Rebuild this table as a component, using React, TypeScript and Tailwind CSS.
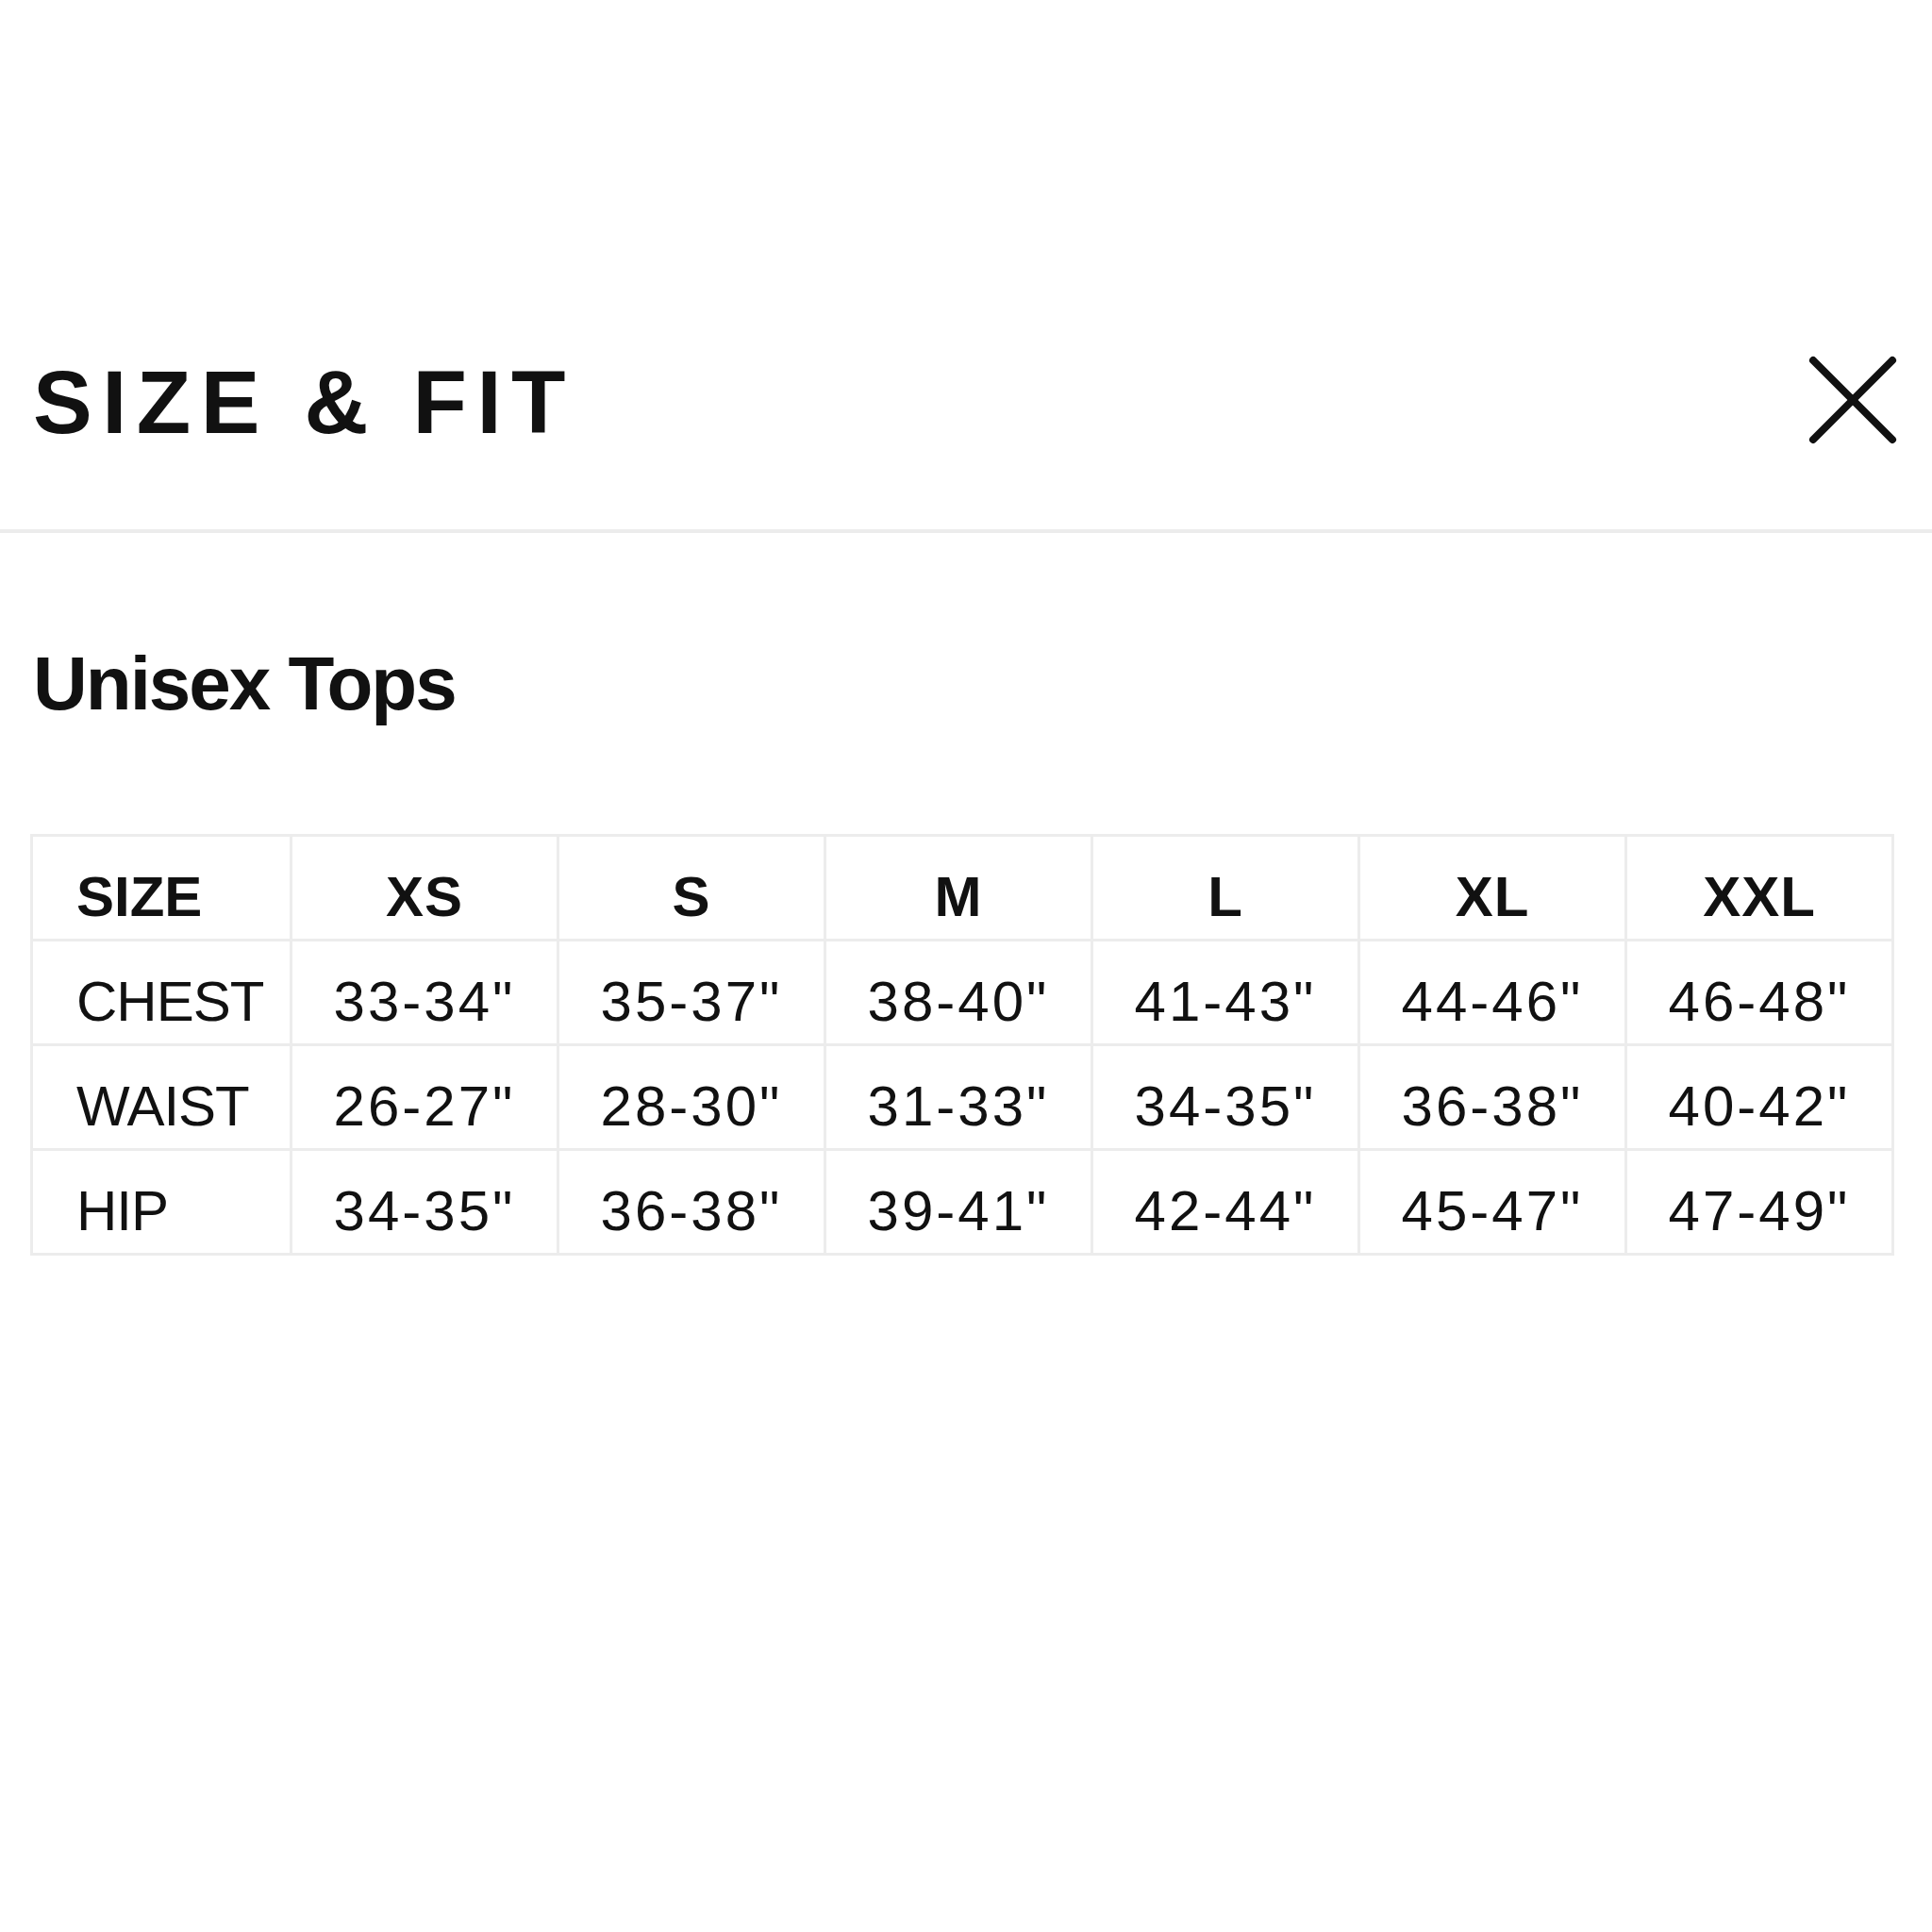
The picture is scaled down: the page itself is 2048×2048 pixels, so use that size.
import React from "react";

// Size & Fit modal — unisex tops size chart

const sizes = ["XS", "S", "M", "L", "XL", "XXL"];

const rows: { label: string; values: string[] }[] = [
  { label: "CHEST", values: ['33-34"', '35-37"', '38-40"', '41-43"', '44-46"', '46-48"'] },
  { label: "WAIST", values: ['26-27"', '28-30"', '31-33"', '34-35"', '36-38"', '40-42"'] },
  { label: "HIP", values: ['34-35"', '36-38"', '39-41"', '42-44"', '45-47"', '47-49"'] },
];

function CloseIcon() {
  return (
    <svg width="94" height="94" viewBox="0 0 94 94" className="-mt-[3px] -mr-[3px] shrink-0" aria-label="Close">
      <line x1="5" y1="5" x2="89" y2="89" stroke="#111" strokeWidth="8" strokeLinecap="round" />
      <line x1="89" y1="5" x2="5" y2="89" stroke="#111" strokeWidth="8" strokeLinecap="round" />
    </svg>
  );
}

function Cell({ children, head = false, first = false }: { children: React.ReactNode; head?: boolean; first?: boolean }) {
  return (
    <div
      className={
        "h-[111px] border-r-[3px] border-b-[3px] border-[#ececec] flex items-center pt-[20px] text-[60px] leading-none " +
        (head ? "font-bold " : "font-normal ") +
        (first
          ? "justify-start pl-[46px] " + (head ? "tracking-[0px]" : "tracking-[-1px]")
          : "justify-center " + (head ? "tracking-[1px]" : "tracking-[3px]"))
      }
    >
      {children}
    </div>
  );
}

export default function App() {
  return (
    <div className="w-[2048px] h-[2048px] bg-white text-[#111] font-['Liberation_Sans',Arial,sans-serif]">
      <div className="pt-[380px] pl-[32px] pr-[40px]">
        {/* Header */}
        <div className="flex items-start justify-between">
          <h1 className="ml-[3px] text-[94px] leading-none font-bold tracking-[10.5px]">SIZE &amp; FIT</h1>
          <CloseIcon />
        </div>
      </div>

      <div className="mt-[87px] h-[4px] bg-[#ececec]" />

      <div className="pl-[32px] pr-[40px]">
        <h2 className="ml-[3px] mt-[120px] text-[80px] leading-none font-bold tracking-[-2px]">Unisex Tops</h2>

        {/* Size table */}
        <div className="mt-[119px] grid grid-cols-[275px_repeat(6,1fr)] border-l-[3px] border-t-[3px] border-[#ececec]">
          <Cell head first>SIZE</Cell>
          {sizes.map((s) => (
            <Cell key={s} head>
              {s}
            </Cell>
          ))}
          {rows.map((r) => (
            <React.Fragment key={r.label}>
              <Cell first>{r.label}</Cell>
              {r.values.map((v, i) => (
                <Cell key={i}>{v}</Cell>
              ))}
            </React.Fragment>
          ))}
        </div>
      </div>
    </div>
  );
}
